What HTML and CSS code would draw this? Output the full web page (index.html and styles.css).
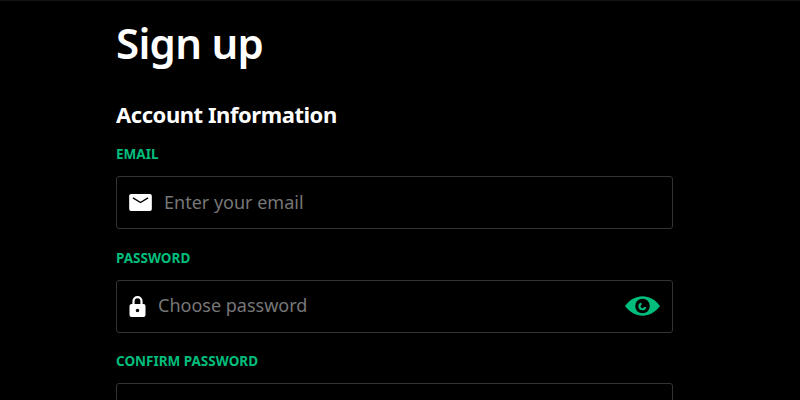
FILE: index.html
```html
<!DOCTYPE html>
<html lang="en">
<head>
    <meta charset="UTF-8">
    <meta name="viewport" content="width=device-width, initial-scale=1.0">
    <title>Sign up</title>
    <link rel="stylesheet" href="styles.css">
</head>
<body>

    <div class="signup">
        <h1 class="title">Sign up</h1>
        <h2 class="subtitle">Account Information</h2>

        <div class="field">
            <label class="label">EMAIL</label>
            <div class="input-box">
                <svg class="icon-mail" viewBox="0 0 24 18">
                    <path fill="#fff" d="M2 0h20a2 2 0 0 1 2 2v14a2 2 0 0 1-2 2H2a2 2 0 0 1-2-2V2a2 2 0 0 1 2-2z"/>
                    <path fill="none" stroke="#000" stroke-width="1.500" d="M4 4l8 5 8-5"/>
                </svg>
                <span class="placeholder">Enter your email</span>
            </div>
        </div>

        <div class="field">
            <label class="label">PASSWORD</label>
            <div class="input-box">
                <svg class="icon-lock" viewBox="0 0 16 21">
                    <path fill="none" stroke="#fff" stroke-width="2.200" d="M4 9V5.100a4 4 0 0 1 8 0V9"/>
                    <rect fill="#fff" x="0" y="8" width="16" height="13" rx="2"/>
                    <circle fill="#000" cx="8" cy="14.500" r="1.700"/>
                </svg>
                <span class="placeholder">Choose password</span>
                <svg class="icon-eye" viewBox="0 0 36 20">
                    <path fill="#00bd7c" d="M0 10C5 3.500 11 0 18 0s13 3.500 18 10c-5 6.500-11 10-18 10S5 16.500 0 10z"/>
                    <circle fill="#000" cx="18" cy="10" r="7.500"/>
                    <path fill="none" stroke="#00bd7c" stroke-width="2.200" d="M17 7.500a3 3 0 1 0 3.800 3.500"/>
                </svg>
            </div>
        </div>

        <div class="field">
            <label class="label">CONFIRM PASSWORD</label>
            <div class="input-box">
                <svg class="icon-eye" viewBox="0 0 36 20">
                    <path fill="#00bd7c" d="M0 10C5 3.500 11 0 18 0s13 3.500 18 10c-5 6.500-11 10-18 10S5 16.500 0 10z"/>
                </svg>
            </div>
        </div>
    </div>

</body>
</html>
```

FILE: styles.css
```css
html, body {
    height: 400px;
    overflow: hidden;
}

body {
    margin: 0;
    background-color: #000;
    border-top: 1px solid #141414;
    font-family: 'Noto Sans', sans-serif;
    color: #fff;
}

.signup {
    width: 557px;
    margin-left: 116px;
}

.title {
    margin: 0;
    height: 87px;
    font-size: 42px;
    line-height: 84px;
    font-weight: 600;
    letter-spacing: -0.7px;
}

.subtitle {
    margin: 0 0 29px;
    height: 28px;
    font-size: 22px;
    line-height: 52px;
    font-weight: 700;
    letter-spacing: -0.45px;
}

.field {
    margin-bottom: 19.5px;
}

.label {
    display: block;
    height: 31px;
    font-size: 13.500px;
    line-height: 18px;
    font-weight: 700;
    color: #00bd7c;
}

.input-box {
    box-sizing: border-box;
    height: 53px;
    display: flex;
    align-items: center;
    padding: 0 12px;
    border: 1px solid #333;
    border-radius: 3px;
}

.placeholder {
    padding-bottom: 2px;
    font-size: 18px;
    color: #777;
}

.icon-mail {
    width: 23px;
    height: 17px;
    margin-right: 12px;
}

.icon-lock {
    width: 17px;
    height: 21px;
    margin-right: 12px;
}

.icon-eye {
    width: 35px;
    height: 20px;
    margin-left: auto;
}
```
